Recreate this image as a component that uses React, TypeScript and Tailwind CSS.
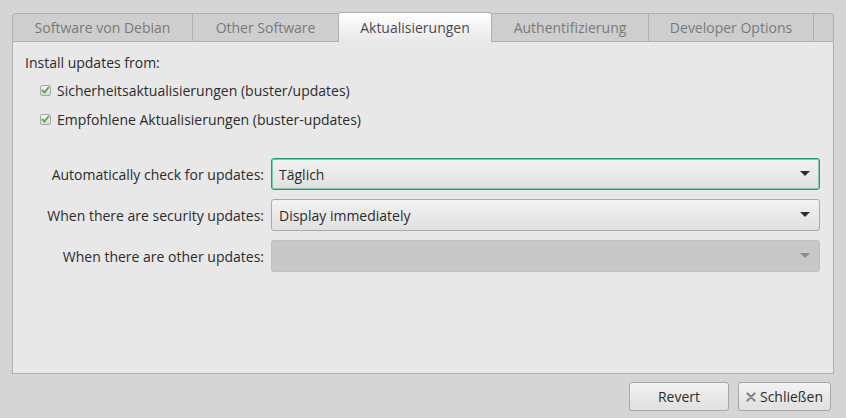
import React from "react";

const tabs = [
  { label: "Software von Debian", w: "w-[181px]", cls: "border-l border-r rounded-tl-[4px]" },
  { label: "Other Software", w: "w-[145px]", cls: "" },
  { label: "Aktualisierungen", w: "w-[154px]", active: true, cls: "" },
  { label: "Authentifizierung", w: "w-[157px]", cls: "border-r" },
  { label: "Developer Options", w: "w-[165px]", cls: "border-r" },
];

const Caret = ({ dim }: { dim?: boolean }) => (
  <svg width="10" height="6" viewBox="0 0 10 6" className="ml-auto">
    <path d="M0 0 L10 0 L5 5 Z" fill={dim ? "#8a8a8a" : "#2e2e2e"} />
  </svg>
);

const Check = () => (
  <span className="w-[11px] h-[11px] rounded-[2px] border border-[#a8a8a8] bg-gradient-to-b from-[#f4f4f4] to-[#d8d8d8] flex items-center justify-center">
    <svg width="9" height="8" viewBox="0 0 9 8">
      <path d="M1 4.2 L3.4 6.5 L8 1" stroke="#5a9e4b" strokeWidth="1.8" fill="none" />
    </svg>
  </span>
);

const rows = [
  { label: "Automatically check for updates:", value: "Täglich", focus: true },
  { label: "When there are security updates:", value: "Display immediately" },
  { label: "When there are other updates:", value: "", disabled: true },
];

export default function App() {
  return (
    <div
      className="w-[846px] h-[418px] bg-[#d5d5d5] flex flex-col text-[14px] text-[#2b2b2b]"
      style={{ fontFamily: "'Open Sans', 'Noto Sans', sans-serif" }}
    >
      <div className="ml-[12px] mt-[12px] w-[822px] flex flex-col">
        {/* Tabs */}
        <div className="flex h-[30px] items-end">
          {tabs.map((t, i) =>
            t.active ? (
              <div
                key={i}
                className={`${t.w} h-[30px] bg-gradient-to-b from-white to-[#e8e8e8] border-t border-x border-[#b0b0b0] rounded-t-[3px] flex items-center justify-center text-[#4a4a4a]`}
              >
                {t.label}
              </div>
            ) : (
              <div
                key={i}
                className={`${t.w} h-[29px] bg-[#cecece] border-t border-b border-[#b0b0b0] ${t.cls} flex items-center justify-center text-[#7a7a7a]`}
              >
                {t.label}
              </div>
            )
          )}
          <div className="flex-1 h-[29px] bg-[#cecece] border-t border-b border-r border-[#b0b0b0] rounded-tr-[4px]" />
        </div>

        {/* Panel */}
        <div className="h-[332px] bg-[#e8e8e8] border-x border-b border-[#b0b0b0] pl-[12px] pr-[13px] pt-[10px] flex flex-col">
          <div className="h-[20px] flex items-center">Install updates from:</div>
          <div className="mt-[8px] ml-[15px] h-[20px] flex items-center gap-[6px]">
            <Check />
            <span>Sicherheitsaktualisierungen (buster/updates)</span>
          </div>
          <div className="mt-[9px] ml-[15px] h-[20px] flex items-center gap-[6px]">
            <Check />
            <span>Empfohlene Aktualisierungen (buster-updates)</span>
          </div>

          <div className="mt-[29px] flex flex-col gap-[9px]">
            {rows.map((r, i) => (
              <div key={i} className="flex items-center h-[32px]">
                <div className="w-[246px] text-right pr-[7px]">{r.label}</div>
                <div
                  className={`flex-1 h-[32px] rounded-[3px] flex items-center px-[7px] pr-[9px] border ${
                    r.disabled
                      ? "bg-[#c8c8c8] border-[#c0c0c0]"
                      : r.focus
                      ? "border-[#1b9e6f] shadow-[inset_0_0_0_1px_#7fc9ad] bg-gradient-to-b from-[#f2f2f2] to-[#e0e0e0]"
                      : "border-[#aaaaaa] bg-gradient-to-b from-[#f2f2f2] to-[#e0e0e0]"
                  }`}
                >
                  <span>{r.value}</span>
                  <Caret dim={r.disabled} />
                </div>
              </div>
            ))}
          </div>
        </div>
      </div>

      {/* Buttons */}
      <div className="flex justify-end gap-[9px] mt-[8px] mr-[15px]">
        <button className="w-[100px] h-[29px] rounded-[3px] border border-[#a8a8a8] bg-gradient-to-b from-[#f2f2f2] to-[#e0e0e0] text-[#2b2b2b]">
          Revert
        </button>
        <button className="w-[93px] h-[29px] rounded-[3px] border border-[#a8a8a8] bg-gradient-to-b from-[#f2f2f2] to-[#e0e0e0] text-[#2b2b2b] flex items-center justify-center gap-[4px]">
          <svg width="10" height="10" viewBox="0 0 10 10">
            <path d="M1.5 1.5 L8.5 8.5 M8.5 1.5 L1.5 8.5" stroke="#8a8a8a" strokeWidth="2.4" strokeLinecap="round" />
          </svg>
          Schließen
        </button>
      </div>
    </div>
  );
}
